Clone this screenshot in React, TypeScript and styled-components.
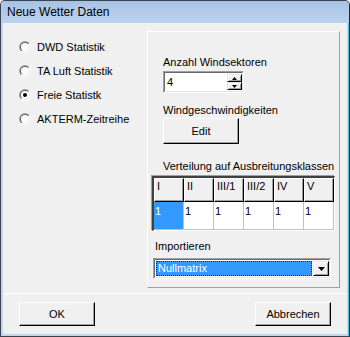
import styled, { createGlobalStyle } from 'styled-components'

const GlobalStyle = createGlobalStyle`
  html, body {
    margin: 0;
    padding: 0;
    background: #ffffff;
  }
  body {
    font-family: 'Liberation Sans', Arial, sans-serif;
    font-size: 11px;
    color: #000000;
  }
  * {
    box-sizing: border-box;
  }
`

const Window = styled.div`
  width: 350px;
  height: 337px;
  border: 1px solid #3c4450;
  border-right-color: #1f2a36;
  border-radius: 5px 5px 0 0;
  background: #c2d7ee;
  display: flex;
  flex-direction: column;
  overflow: hidden;
  box-shadow: inset -1px 0 #4ec4f0;
`

const TitleBar = styled.div`
  height: 22px;
  flex-shrink: 0;
  background: linear-gradient(#a7c3e4, #bcd3ed);
  padding-left: 6px;
  display: flex;
  align-items: center;
  font-size: 12px;
`

const Body = styled.div`
  flex: 1;
  margin: 0 2px 2px;
  background: #f0f0f0;
  display: flex;
  flex-direction: column;
`

const Main = styled.div`
  display: flex;
  padding-top: 8px;
`

const RadioList = styled.div`
  width: 144px;
  padding: 4px 0 0 16px;
  display: flex;
  flex-direction: column;
`

const RadioRow = styled.label`
  height: 24px;
  display: flex;
  align-items: center;
  gap: 6px;
  line-height: 13px;
`

const Panel = styled.div`
  width: 193px;
  height: 257px;
  border: 1px solid;
  border-color: #ffffff #a0a0a0 #a0a0a0 #ffffff;
  padding: 24px 0 0 3px;
  display: flex;
  flex-direction: column;
  align-items: flex-start;
`

const Label = styled.div<{ $indent?: number; $top?: number }>`
  line-height: 13px;
  margin-left: ${({ $indent = 0 }) => $indent}px;
  margin-top: ${({ $top = 0 }) => $top}px;
  white-space: nowrap;
`

const Sunken = styled.div<{ $indent?: number; $top?: number; $w: number; $h: number }>`
  width: ${({ $w }) => $w}px;
  height: ${({ $h }) => $h}px;
  margin-left: ${({ $indent = 0 }) => $indent}px;
  margin-top: ${({ $top = 0 }) => $top}px;
  border: 1px solid;
  border-color: #a0a0a0 #ffffff #ffffff #a0a0a0;
`

const SunkenInner = styled.div`
  height: 100%;
  border: 1px solid;
  border-color: #696969 #e3e3e3 #e3e3e3 #696969;
  background: #ffffff;
  display: flex;
  align-items: stretch;
`

const SpinText = styled.div`
  flex: 1;
  padding: 3px 0 0 2px;
  line-height: 13px;
`

const SpinButtons = styled.div`
  width: 15px;
  display: flex;
  flex-direction: column;
  padding: 1px 0;
`

const Raised = styled.div`
  background: #f0f0f0;
  border: 1px solid;
  border-color: #e3e3e3 #000000 #000000 #e3e3e3;
  box-shadow: inset 1px 1px #ffffff, inset -1px -1px #a0a0a0;
  display: flex;
  align-items: center;
  justify-content: center;
`

const SpinButton = styled(Raised)`
  flex: 1;
`

const Button = styled.button<{ $indent?: number; $top?: number; $h?: number }>`
  width: 76px;
  height: ${({ $h = 24 }) => $h}px;
  margin-left: ${({ $indent = 0 }) => $indent}px;
  margin-top: ${({ $top = 0 }) => $top}px;
  padding: 0;
  font: inherit;
  color: #000000;
  background: #f0f0f0;
  border: 1px solid;
  border-color: #ffffff #000000 #000000 #ffffff;
  box-shadow: inset -1px -1px #a0a0a0;
  border-radius: 0;
`

const Grid = styled.div`
  margin-top: 3px;
  border-style: solid;
  border-width: 2px 1px 1px 2px;
  border-color: #404040 #ffffff #ffffff #404040;
  box-shadow: -1px -1px 0 0 #a0a0a0;
  margin-left: 1px;
  display: grid;
  grid-template-columns: repeat(6, 30px);
  grid-template-rows: 24px 28px;
`

const HeadCell = styled.div`
  background: #f0f0f0;
  border: 1px solid;
  border-color: #ffffff #000000 #000000 #ffffff;
  box-shadow: inset -1px -1px #a0a0a0;
  padding: 1px 0 0 2px;
  line-height: 13px;
`

const DataCell = styled.div<{ $selected?: boolean }>`
  background: ${({ $selected }) => ($selected ? '#3399ff' : '#ffffff')};
  color: ${({ $selected }) => ($selected ? '#ffffff' : '#000000')};
  border-right: 1px solid #c0c0c0;
  border-bottom: 1px solid #c0c0c0;
  padding: 3px 0 0 1px;
  line-height: 13px;
`

const ComboSelection = styled.div`
  flex: 1;
  margin: 1px;
  background: #3399ff;
  color: #ffffff;
  border: 1px dotted #202020;
  padding-left: 1px;
  line-height: 13px;
`

const ComboButton = styled(Raised)`
  width: 16px;
  margin: 1px 0;
`

const Separator = styled.div`
  height: 1px;
  margin-top: 5px;
  background: #ffffff;
`

const Footer = styled.div`
  display: flex;
  justify-content: space-between;
  padding: 8px 16px 0;
`

const RadioMark = ({ checked }: { checked?: boolean }) => (
  <svg width="12" height="12" viewBox="0 0 12 12">
    <defs>
      <linearGradient id="radio-outer" x1="0" y1="0" x2="1" y2="1">
        <stop offset="0.5" stopColor="#a0a0a0" />
        <stop offset="0.5" stopColor="#ffffff" />
      </linearGradient>
      <linearGradient id="radio-inner" x1="0" y1="0" x2="1" y2="1">
        <stop offset="0.5" stopColor="#696969" />
        <stop offset="0.5" stopColor="#e3e3e3" />
      </linearGradient>
    </defs>
    <circle cx="6" cy="6" r="6" fill="url(#radio-outer)" />
    <circle cx="6" cy="6" r="5" fill="url(#radio-inner)" />
    <circle cx="6" cy="6" r="4" fill="#ffffff" />
    {checked && <circle cx="6" cy="6" r="2" fill="#000000" />}
  </svg>
)

const Arrow = ({ up, w, h }: { up?: boolean; w: number; h: number }) => (
  <svg width={w} height={h} viewBox={`0 0 ${w} ${h}`}>
    <polygon points={up ? `0,${h} ${w},${h} ${w / 2},0` : `0,0 ${w},0 ${w / 2},${h}`} fill="#000000" />
  </svg>
)

const options = [
  { label: 'DWD Statistik' },
  { label: 'TA Luft Statistik' },
  { label: 'Freie Statistk', checked: true },
  { label: 'AKTERM-Zeitreihe' },
]

const classes = ['I', 'II', 'III/1', 'III/2', 'IV', 'V']

export default function App() {
  return (
    <>
      <GlobalStyle />
      <Window>
        <TitleBar>Neue Wetter Daten</TitleBar>
        <Body>
          <Main>
            <RadioList>
              {options.map((o) => (
                <RadioRow key={o.label}>
                  <RadioMark checked={o.checked} />
                  {o.label}
                </RadioRow>
              ))}
            </RadioList>
            <Panel>
              <Label $indent={12}>Anzahl Windsektoren</Label>
              <Sunken $indent={12} $top={2} $w={81} $h={22}>
                <SunkenInner>
                  <SpinText>4</SpinText>
                  <SpinButtons>
                    <SpinButton>
                      <Arrow up w={5} h={3} />
                    </SpinButton>
                    <SpinButton>
                      <Arrow w={5} h={3} />
                    </SpinButton>
                  </SpinButtons>
                </SunkenInner>
              </Sunken>
              <Label $indent={12} $top={11}>Windgeschwindigkeiten</Label>
              <Button $indent={12} $top={1} $h={26}>Edit</Button>
              <Label $indent={12} $top={16}>Verteilung auf Ausbreitungsklassen</Label>
              <Grid>
                {classes.map((c) => (
                  <HeadCell key={c}>{c}</HeadCell>
                ))}
                {classes.map((c, i) => (
                  <DataCell key={c} $selected={i === 0}>1</DataCell>
                ))}
              </Grid>
              <Label $indent={4} $top={9}>Importieren</Label>
              <Sunken $indent={2} $top={5} $w={178} $h={21}>
                <SunkenInner>
                  <ComboSelection>Nullmatrix</ComboSelection>
                  <ComboButton>
                    <Arrow w={7} h={4} />
                  </ComboButton>
                </SunkenInner>
              </Sunken>
            </Panel>
          </Main>
          <Separator />
          <Footer>
            <Button>OK</Button>
            <Button>Abbrechen</Button>
          </Footer>
        </Body>
      </Window>
    </>
  )
}
